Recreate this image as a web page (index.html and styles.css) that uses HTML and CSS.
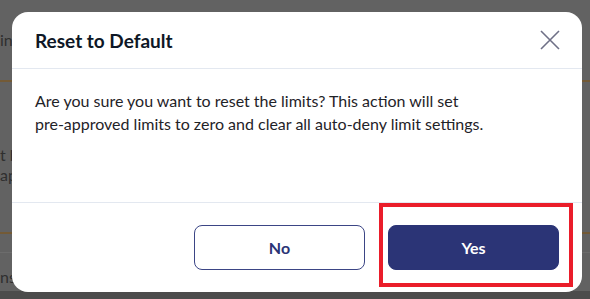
FILE: index.html
```html
<!DOCTYPE html>
<html lang="en">
<head>
    <meta charset="UTF-8">
    <meta name="viewport" content="width=device-width, initial-scale=1.0">
    <title>Reset to Default</title>
    <link rel="stylesheet" href="styles.css">
</head>
<body>
    <div class="page">
        <div class="page-row first"><span class="page-text">in</span></div>
        <div class="page-line"></div>
        <div class="page-row middle">
            <span class="page-text">t b</span>
            <span class="page-text">ap</span>
        </div>
        <div class="page-line"></div>
        <div class="page-line faint"></div>
        <div class="page-row last"><span class="page-text">ns</span></div>
        <div class="page-footer"></div>
    </div>

    <div class="overlay">
        <div class="dialog">
            <div class="dialog-header">
                <h2 class="dialog-title">Reset to Default</h2>
                <button class="close-btn" aria-label="Close">
                    <svg width="20" height="20" viewBox="0 0 20 20">
                        <path d="M1 1 L19 19 M19 1 L1 19" stroke="#6f7087" stroke-width="1.6" fill="none"/>
                    </svg>
                </button>
            </div>
            <div class="dialog-body">
                <p>Are you sure you want to reset the limits? This action will set<br>pre-approved limits to zero and clear all auto-deny limit settings.</p>
            </div>
            <div class="dialog-footer">
                <button class="btn btn-outline">No</button>
                <button class="btn btn-primary">Yes</button>
                <div class="highlight"></div>
            </div>
        </div>
    </div>
</body>
</html>
```

FILE: styles.css
```css
body {
    margin: 0;
    font-family: Lato, "Noto Sans", sans-serif;
    background: #626262;
    width: 590px;
    height: 299px;
    overflow: hidden;
    position: relative;
}

/* dimmed page behind the modal */
.page {
    color: #2f2f2f;
    font-size: 16px;
    line-height: 20px;
    height: 299px;
    display: flex;
    flex-direction: column;
}

.page-row {
    display: flex;
    flex-direction: column;
    padding-left: 0;
}

.page-row.first {
    height: 80px;
    padding-top: 30px;
    box-sizing: border-box;
}

.page-row.middle {
    height: 150px;
    padding-top: 63px;
    box-sizing: border-box;
}

.page-row.last {
    height: 38px;
    padding-top: 14px;
    box-sizing: border-box;
}

.page-line {
    height: 2px;
    flex-shrink: 0;
    background: #735a36;
}

.page-line.faint {
    height: 1px;
    margin-top: 18px;
    background: #6c6c6c;
}

.page-footer {
    flex: 1;
    background: #4c4c4c;
}

.overlay {
    position: absolute;
    top: 12px;
    left: 12px;
}

.dialog {
    width: 570px;
    height: 280px;
    background: #fff;
    border-radius: 16px;
    display: flex;
    flex-direction: column;
    overflow: hidden;
}

.dialog-header {
    height: 56px;
    display: flex;
    align-items: center;
    justify-content: space-between;
    padding: 0 22px 0 23px;
    border-bottom: 1px solid #e3e8f0;
}

.dialog-title {
    margin: 0;
    font-size: 19px;
    font-weight: 700;
    color: #0e1726;
}

.close-btn {
    background: none;
    border: none;
    padding: 0;
    width: 20px;
    height: 20px;
    cursor: pointer;
}

.dialog-body {
    flex: 1;
    padding: 0 23px;
    border-bottom: 1px solid #e3e8f0;
}

.dialog-body p {
    margin: 20px 0 0;
    font-size: 16px;
    line-height: 23px;
    color: #1f2328;
}

.dialog-footer {
    position: relative;
    display: flex;
    justify-content: flex-end;
    gap: 23px;
    padding: 22px 23px 22px 0;
}

.btn {
    width: 171px;
    height: 45px;
    border-radius: 8px;
    font-family: Lato, "Noto Sans", sans-serif;
    font-size: 16px;
    font-weight: 700;
    cursor: pointer;
}

.btn-outline {
    background: #fff;
    border: 1px solid #3b4585;
    color: #2b3476;
}

.btn-primary {
    background: #2b3476;
    border: 1px solid #2b3476;
    color: #fff;
}

.highlight {
    position: absolute;
    left: 367px;
    top: 0;
    width: 186px;
    height: 76px;
    border: 4px solid #ea1d2a;
}
```
